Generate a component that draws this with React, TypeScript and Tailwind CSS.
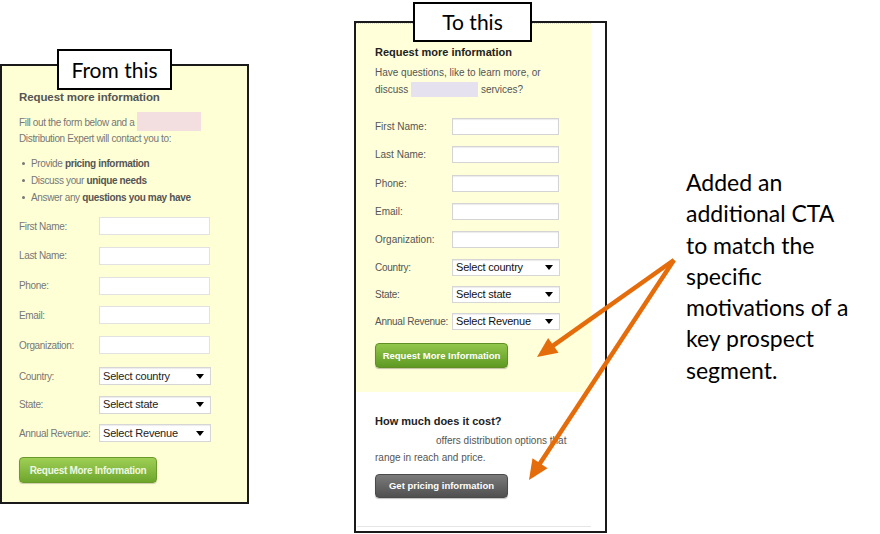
const ui = "font-['Liberation_Sans',Arial,sans-serif]";
const slide = "font-['Lato','Open_Sans',sans-serif]";

function Arrow({ x1, y1, x2, y2 }: { x1: number; y1: number; x2: number; y2: number }) {
  const dx = x2 - x1;
  const dy = y2 - y1;
  const len = Math.hypot(dx, dy);
  const ux = dx / len;
  const uy = dy / len;
  const head = 20;
  const half = 9;
  const bx = x2 - ux * head;
  const by = y2 - uy * head;
  const pts = [
    [x2, y2],
    [bx - uy * half, by + ux * half],
    [bx + uy * half, by - ux * half],
  ]
    .map((p) => p.join(","))
    .join(" ");
  return (
    <g>
      <line x1={x1} y1={y1} x2={bx + ux * 2} y2={by + uy * 2} stroke="#e46c0a" strokeWidth={4.5} />
      <polygon points={pts} fill="#e46c0a" />
    </g>
  );
}

function Caption({ text, className }: { text: string; className: string }) {
  return (
    <div
      className={`absolute flex items-center justify-center border-2 border-black bg-white text-[21px] text-black ${slide} ${className}`}
    >
      {text}
    </div>
  );
}

function SelectBox({ label, className }: { label: string; className: string }) {
  return (
    <div
      className={`flex items-center justify-between bg-white border border-[#d6d6d6] shadow-[inset_0_1px_1px_rgba(0,0,0,0.08)] pl-[3px] pr-[6px] text-[11px] tracking-[-0.2px] text-[#111] ${className}`}
    >
      <span>{label}</span>
      <span className="w-0 h-0 border-l-[4px] border-r-[4px] border-t-[5px] border-l-transparent border-r-transparent border-t-black" />
    </div>
  );
}

const fields = ["First Name:", "Last Name:", "Phone:", "Email:", "Organization:"];
const selects: [string, string][] = [
  ["Country:", "Select country"],
  ["State:", "Select state"],
  ["Annual Revenue:", "Select Revenue"],
];

function Bullet({ children }: { children: React.ReactNode }) {
  return (
    <li className="flex items-center gap-[6px]">
      <span className="w-[3px] h-[3px] rounded-full bg-[#777]" />
      <span>{children}</span>
    </li>
  );
}

function OldForm() {
  return (
    <div className={`relative mt-[64px] w-[249px] h-[440px] shrink-0 border-2 border-[#1a1a1a] bg-[#ffffd6] ${ui}`}>
      <Caption text="From this" className="left-[55px] -top-[17px] w-[115px] h-[41px]" />
      <div className="pl-[17px] pr-[36px] pt-[23px] text-[10px] tracking-[-0.35px] text-[#777]">
        <h3 className="text-[11.5px] leading-[16px] font-bold tracking-[-0.1px] text-[#555]">Request more information</h3>
        <p className="mt-[7px] leading-[16px]">
          Fill out the form below and a{" "}
          <span className="inline-block align-[-5px] w-[64px] h-[19px] bg-[#f3dfe0]" />
          <br />
          Distribution Expert will contact you to:
        </p>
        <ul className="mt-[8px] leading-[17px] pl-[3px]">
          <Bullet>
            Provide <b className="text-[#555]">pricing information</b>
          </Bullet>
          <Bullet>
            Discuss your <b className="text-[#555]">unique needs</b>
          </Bullet>
          <Bullet>
            Answer any <b className="text-[#555]">questions you may have</b>
          </Bullet>
        </ul>
        <div className="mt-[11px] flex flex-col gap-[11.75px]">
          {fields.map((f) => (
            <div key={f} className="flex items-center h-[18px]">
              <span className="w-[80px] shrink-0">{f}</span>
              <div className="w-[111px] h-[18px] bg-white border border-[#e2e2e2]" />
            </div>
          ))}
        </div>
        <div className="mt-[13px] flex flex-col gap-[10.5px]">
          {selects.map(([l, v]) => (
            <div key={l} className="flex items-center h-[18px]">
              <span className="w-[80px] shrink-0">{l}</span>
              <SelectBox label={v} className="w-[113px] h-[18px] text-[11.5px] text-[#222]" />
            </div>
          ))}
        </div>
        <button className="mt-[15px] w-[138px] h-[26px] rounded-[4px] border border-[#6a9a2a] bg-gradient-to-b from-[#9fcf55] to-[#6ea62c] text-[10px] font-bold text-[#eef7e0] tracking-[-0.3px] shadow-[0_1px_1px_rgba(0,0,0,0.2)]">
          Request More Information
        </button>
      </div>
    </div>
  );
}

function NewForm() {
  return (
    <div className={`relative ml-[105px] mt-[21px] w-[253px] h-[512px] shrink-0 border-2 border-[#1a1a1a] bg-white ${ui}`}>
      <Caption text="To this" className="left-[57px] -top-[21px] w-[119px] h-[40px]" />
      <div className="w-[235px] h-[369px] bg-[#ffffd9] border-t border-dotted border-[#d8d8c0] pl-[19px] pt-[20px] text-[10px] text-[#555]">
        <h3 className="text-[11px] leading-[16px] font-bold text-[#222]">Request more information</h3>
        <p className="mt-[4px] leading-[17px]">
          Have questions, like to learn more, or
          <br />
          discuss <span className="inline-block align-[-4px] w-[67px] h-[15px] bg-[#e6e1ee]" /> services?
        </p>
        <div className="mt-[20px] flex flex-col gap-[11.3px]">
          {fields.map((f) => (
            <div key={f} className="flex items-center h-[17px]">
              <span className="w-[77px] shrink-0">{f}</span>
              <div className="w-[107px] h-[17px] bg-white border border-[#d4d4d4] shadow-[inset_0_1px_1px_rgba(0,0,0,0.08)]" />
            </div>
          ))}
        </div>
        <div className="mt-[10.8px] flex flex-col gap-[10px]">
          {selects.map(([l, v]) => (
            <div key={l} className="flex items-center h-[17px]">
              <span className="w-[77px] shrink-0 tracking-[-0.25px]">{l}</span>
              <SelectBox label={v} className="w-[108px] h-[17px]" />
            </div>
          ))}
        </div>
        <button className="mt-[13.5px] w-[133px] h-[25px] rounded-[4px] border border-[#5f8f25] bg-gradient-to-b from-[#92c74a] to-[#5e9a22] text-[9.5px] font-bold text-white shadow-[0_1px_1px_rgba(0,0,0,0.25)]">
          Request More Information
        </button>
      </div>
      <div className="w-[235px] pl-[19px] pt-[21px] text-[10px] text-[#555]">
        <h3 className="text-[11px] leading-[16px] font-bold text-[#222]">How much does it cost?</h3>
        <p className="mt-[3px] leading-[17px]">
          <span className="inline-block w-[61px]" />
          offers distribution options that
          <br />
          range in reach and price.
        </p>
        <button className="mt-[8px] w-[133px] h-[24px] rounded-[4px] border border-[#4a4a4a] bg-gradient-to-b from-[#7b7b7b] to-[#505050] text-[9.5px] font-bold text-white shadow-[0_1px_1px_rgba(0,0,0,0.25)]">
          Get pricing information
        </button>
        <div className="mt-[28px] -ml-[18px] w-[234px] border-t border-[#e6e6e6]" />
      </div>
    </div>
  );
}

export default function App() {
  return (
    <div className="relative w-[880px] h-[534px] bg-white overflow-hidden">
      <div className="flex items-start">
        <OldForm />
        <NewForm />
        <p className={`ml-[79px] mt-[167px] text-[23px] leading-[31.3px] text-black ${slide}`}>
          Added an
          <br />
          additional CTA
          <br />
          to match the
          <br />
          specific
          <br />
          motivations of a
          <br />
          key prospect
          <br />
          segment.
        </p>
      </div>
      <svg className="absolute inset-0 pointer-events-none" width={880} height={534}>
        <Arrow x1={674} y1={260} x2={537} y2={357} />
        <Arrow x1={674} y1={260} x2={529} y2={480} />
      </svg>
    </div>
  );
}
